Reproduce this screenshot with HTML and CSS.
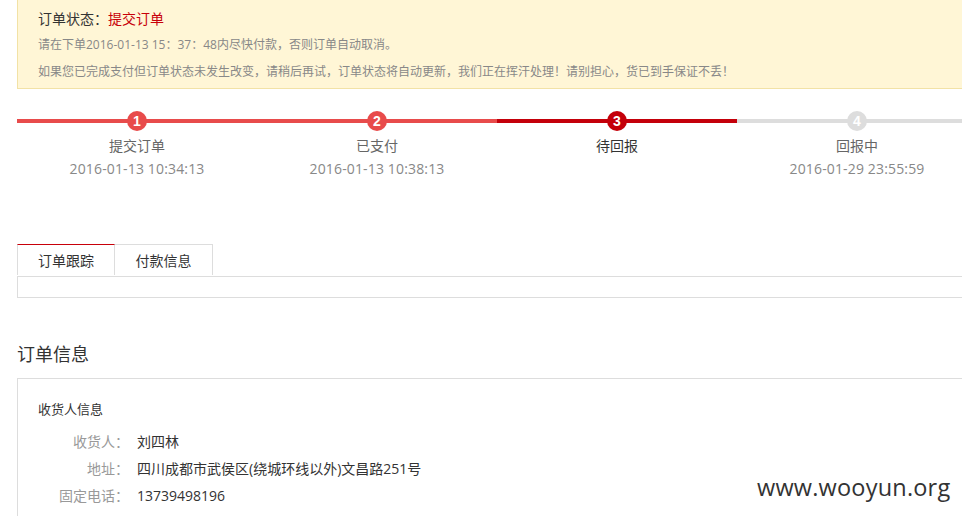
FILE: index.html
```html
<!DOCTYPE html>
<html lang="zh-CN">
<head>
<meta charset="utf-8">
<title>订单详情</title>
<link rel="stylesheet" href="styles.css">
</head>
<body>
<div class="page">
  <div class="notice">
    <p class="status">订单状态：<span class="red">提交订单</span></p>
    <p class="tip">请在下单2016-01-13 15：37：48内尽快付款，否则订单自动取消。</p>
    <p class="tip">如果您已完成支付但订单状态未发生改变，请稍后再试，订单状态将自动更新，我们正在挥汗处理！请别担心，货已到手保证不丢！</p>
  </div>

  <div class="steps">
    <div class="step done">
      <div class="track"><span class="dot">1</span></div>
      <div class="name">提交订单</div>
      <div class="time">2016-01-13 10:34:13</div>
    </div>
    <div class="step done">
      <div class="track"><span class="dot">2</span></div>
      <div class="name">已支付</div>
      <div class="time">2016-01-13 10:38:13</div>
    </div>
    <div class="step current">
      <div class="track"><span class="dot">3</span></div>
      <div class="name">待回报</div>
      <div class="time"></div>
    </div>
    <div class="step todo">
      <div class="track"><span class="dot">4</span></div>
      <div class="name">回报中</div>
      <div class="time">2016-01-29 23:55:59</div>
    </div>
  </div>

  <div class="tabs">
    <div class="tab active">订单跟踪</div>
    <div class="tab">付款信息</div>
  </div>
  <div class="tab-body"></div>

  <h2 class="section-title">订单信息</h2>
  <div class="info-box">
    <h3 class="info-title">收货人信息</h3>
    <div class="row"><span class="label">收货人：</span><span class="value">刘四林</span></div>
    <div class="row"><span class="label">地址：</span><span class="value">四川成都市武侯区(绕城环线以外)文昌路251号</span></div>
    <div class="row"><span class="label">固定电话：</span><span class="value">13739498196</span></div>
  </div>
</div>
<div class="watermark">www.wooyun.org</div>
</body>
</html>
```
FILE: styles.css
```css
html, body {
  margin: 0;
  padding: 0;
}
body {
  width: 962px;
  height: 516px;
  overflow: hidden;
  background: #fff;
  font-family: "Open Sans", "Noto Sans CJK SC", "Noto Sans", sans-serif;
  color: #333;
  position: relative;
}
.page {
  margin-left: 17px;
  width: 990px;
}
.notice {
  background: #fff6d6;
  border: 1px solid #f2e2a6;
  border-top: none;
  padding: 6px 20px 3px 20px;
  height: 79px;
}
.notice p {
  margin: 0;
}
.status {
  font-size: 14px;
  line-height: 26px;
  color: #333;
}
.red {
  color: #c8000a;
}
.tip {
  font-size: 12px;
  line-height: 26px;
  color: #888;
}
.tip + .tip {
  line-height: 28px;
}
.steps {
  display: flex;
  margin-top: 22px;
  height: 133px;
}
.step {
  width: 240px;
  text-align: center;
}
.track {
  height: 20px;
  display: flex;
  justify-content: center;
  align-items: center;
  background: linear-gradient(to bottom, transparent 8px, var(--c) 8px, var(--c) 12px, transparent 12px);
}
.dot {
  width: 20px;
  height: 20px;
  border-radius: 50%;
  background: var(--c);
  color: #fff;
  font-family: "Liberation Sans", Arial, sans-serif;
  font-weight: bold;
  font-size: 14px;
  line-height: 20px;
  text-align: center;
}
.done { --c: #e84b4b; }
.current { --c: #c4000a; }
.todo { --c: #dddddd; }
.name {
  margin-top: 4px;
  font-size: 14px;
  line-height: 22px;
  color: #666;
}
.current .name {
  color: #333;
}
.time {
  font-size: 14px;
  line-height: 24px;
  color: #888;
  letter-spacing: 0.15px;
}
.tabs {
  display: flex;
  height: 32px;
}
.tab {
  width: 96px;
  height: 30px;
  border: 1px solid #ddd;
  border-bottom: none;
  font-size: 14px;
  line-height: 32px;
  text-align: center;
  color: #333;
  background: #fff;
}
.tab + .tab {
  border-left: none;
  width: 97px;
}
.tab.active {
  border-top: 1px solid #c8000a;
}
.tab-body {
  height: 20px;
  border: 1px solid #ddd;
}
.section-title {
  margin: 44px 0 0 0;
  font-size: 18px;
  font-weight: normal;
  line-height: 24px;
  color: #333;
  height: 36px;
}
.info-box {
  border-top: 1px solid #ddd;
  border-left: 1px solid #ddd;
  padding: 19px 20px 0 20px;
  height: 118px;
}
.info-title {
  margin: 0 0 8px 0;
  font-size: 13px;
  font-weight: normal;
  line-height: 22px;
  color: #333;
}
.row {
  display: flex;
  font-size: 14px;
  line-height: 27px;
}
.label {
  width: 91px;
  text-align: right;
  color: #999;
}
.value {
  margin-left: 8px;
  color: #333;
}
.watermark {
  position: absolute;
  left: 757px;
  top: 471px;
  font-family: "Open Sans", "DejaVu Sans", sans-serif;
  font-size: 23.5px;
  line-height: 32px;
  color: #333;
  letter-spacing: 0.2px;
}
```
